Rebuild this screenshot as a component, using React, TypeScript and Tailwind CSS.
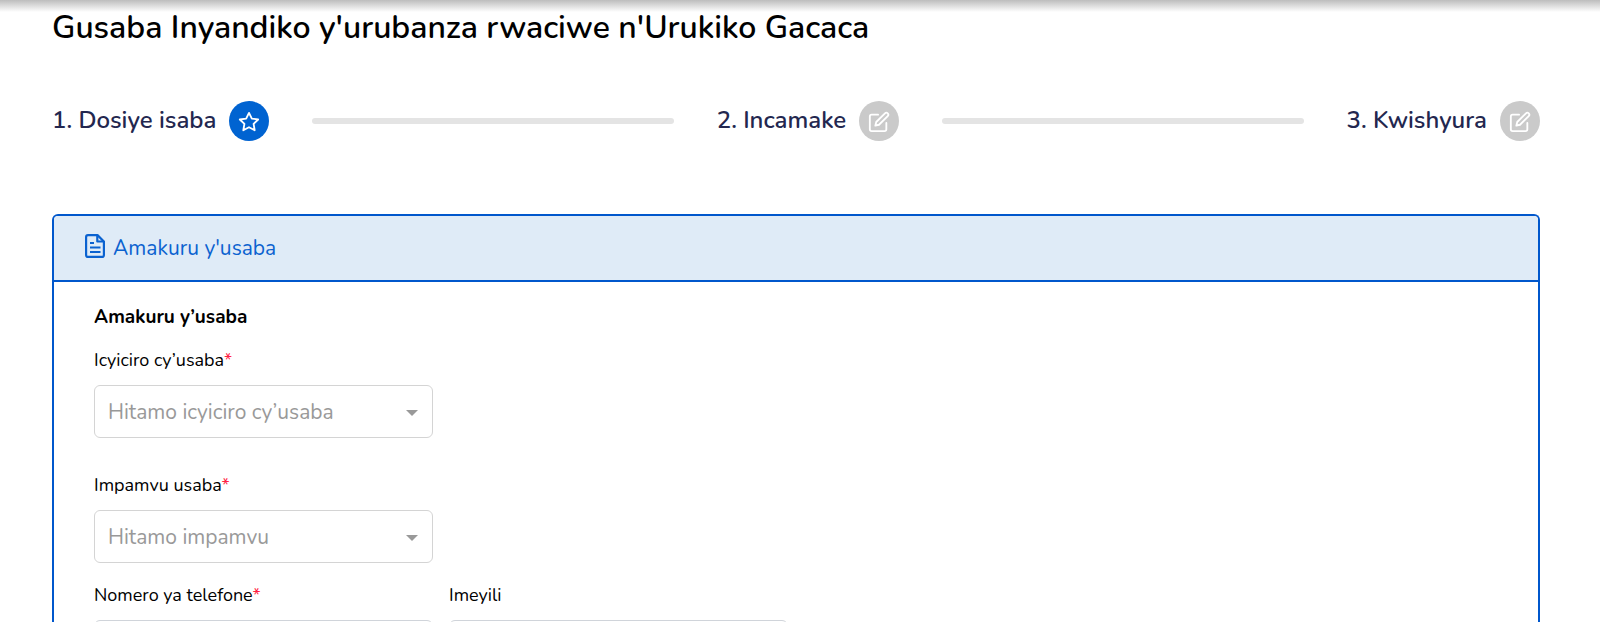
import type { ReactNode } from "react";
import { FiEdit, FiStar } from "react-icons/fi";

type SelectFieldProps = {
  id: string;
  label: string;
  placeholder: string;
};

function FileIcon() {
  return (
    <svg viewBox="0 0 20 24" className="mb-1 h-6 w-5" fill="none" stroke="currentColor" strokeWidth="2.2" strokeLinejoin="round" aria-hidden="true">
      <path d="M12.5 1.1H3a2 2 0 0 0-1.9 2v17.8a2 2 0 0 0 2 2h13.8a2 2 0 0 0 2-2V7.5z" />
      <path d="M12.3 1.1v6.4h6.6" />
      <path d="M5 9h4M5 13.4h10.5M5 18h10.5" strokeWidth="2" />
    </svg>
  );
}

function Step({ label, active, children }: { label: string; active?: boolean; children: ReactNode }) {
  return (
    <li className="flex shrink-0 items-center gap-[13px]">
      <span className="pb-0.5 text-2xl leading-9 font-semibold text-[#23274f]">{label}</span>
      <span
        className={
          active
            ? "flex size-10 items-center justify-center rounded-full bg-[#0063d1] pt-0.5 text-white"
            : "flex size-10 items-center justify-center rounded-full bg-[#cacaca] pt-0.5 text-white"
        }
      >
        {children}
      </span>
    </li>
  );
}

function StepLine() {
  return <li aria-hidden="true" className="h-1.5 flex-1 rounded-full bg-[#e4e4e4]" />;
}

function FieldLabel({ htmlFor, required, children }: { htmlFor: string; required?: boolean; children: ReactNode }) {
  return (
    <label htmlFor={htmlFor} className="block text-lg leading-7 text-black">
      {children}
      {required && <span className="text-[#ff1f44]">*</span>}
    </label>
  );
}

function SelectField({ id, label, placeholder }: SelectFieldProps) {
  return (
    <div>
      <FieldLabel htmlFor={id} required>
        {label}
      </FieldLabel>
      <div className="relative mt-[11px]">
        <select
          id={id}
          defaultValue=""
          className="block h-[53px] w-full appearance-none rounded-md border border-[#d4d4d4] bg-white px-[13px] pt-0.5 text-[21px] text-[#999999]"
        >
          <option value="">{placeholder}</option>
        </select>
        <svg viewBox="0 0 12 6" className="pointer-events-none absolute top-[25px] right-[15px] h-1.5 w-3 fill-[#999999]" aria-hidden="true">
          <path d="M0 0h12L6 6z" />
        </svg>
      </div>
    </div>
  );
}

export default function App() {
  return (
    <div className="bg-white font-['Nunito','Lato',sans-serif]">
      {/* Shadow of the bar above */}
      <div className="h-3 bg-linear-to-b from-[#bdbdbd] to-white" />

      <main className="pr-15 pl-13">
        <h1 className="text-[32px] leading-8 font-semibold text-black">Gusaba Inyandiko y'urubanza rwaciwe n'Urukiko Gacaca</h1>

        <ol className="mt-[57px] flex items-center gap-[43px]">
          <Step label="1. Dosiye isaba" active>
            <FiStar size={22} />
          </Step>
          <StepLine />
          <Step label="2. Incamake">
            <FiEdit size={22} />
          </Step>
          <StepLine />
          <Step label="3. Kwishyura">
            <FiEdit size={22} />
          </Step>
        </ol>

        <section className="mt-[73px] overflow-hidden rounded-t-md border-2 border-b-0 border-[#0057cc]">
          <div className="flex h-[66px] items-center gap-2 border-b-2 border-[#0057cc] bg-[#dfebf7] px-[31px] text-[#0b62d0]">
            <FileIcon />
            <h2 className="pt-0.5 text-[21px]">Amakuru y'usaba</h2>
          </div>

          <form className="px-10 pt-5 pb-10">
            <h3 className="text-[19px] leading-[30px] font-bold text-black">Amakuru y’usaba</h3>
            <div className="mt-3.5 grid grid-cols-4 gap-x-4">
              <div className="col-start-1">
                <SelectField id="icyiciro" label="Icyiciro cy’usaba" placeholder="Hitamo icyiciro cy’usaba" />
              </div>
              <div className="col-start-1 mt-[33px]">
                <SelectField id="impamvu" label="Impamvu usaba" placeholder="Hitamo impamvu" />
              </div>
              <div className="col-start-1 mt-[18px]">
                <FieldLabel htmlFor="telefone" required>
                  Nomero ya telefone
                </FieldLabel>
                <input id="telefone" type="tel" className="mt-[11px] block h-[53px] w-full rounded-md border border-[#d0d4da] px-[13px] text-[21px]" />
              </div>
              <div className="mt-[18px]">
                <FieldLabel htmlFor="imeyili">Imeyili</FieldLabel>
                <input id="imeyili" type="email" className="mt-[11px] block h-[53px] w-full rounded-md border border-[#d0d4da] px-[13px] text-[21px]" />
              </div>
            </div>
          </form>
        </section>
      </main>
    </div>
  );
}
